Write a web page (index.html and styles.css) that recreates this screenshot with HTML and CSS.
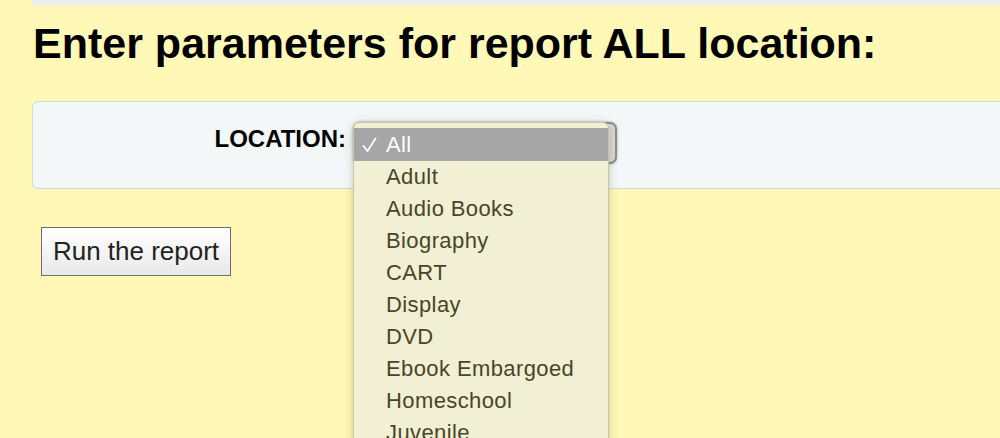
FILE: index.html
```html
<!DOCTYPE html>
<html>
<head>
<meta charset="utf-8">
<link rel="stylesheet" href="styles.css">
</head>
<body>
<div class="topbar"></div>
<h1 class="title">Enter parameters for report ALL location:</h1>
<div class="params">
  <div class="param-row">
    <label class="param-label">LOCATION:</label>
    <div class="select">
      <div class="select-box"></div>
      <ul class="popup">
        <li class="opt selected"><svg class="check" width="15" height="16" viewBox="0 0 15 16"><path d="M1.5 9 L5.5 14 L13.5 1.5" fill="none" stroke="#fff" stroke-width="1.8" stroke-linecap="round" stroke-linejoin="round"/></svg>All</li>
        <li class="opt">Adult</li>
        <li class="opt">Audio Books</li>
        <li class="opt">Biography</li>
        <li class="opt">CART</li>
        <li class="opt">Display</li>
        <li class="opt">DVD</li>
        <li class="opt">Ebook Embargoed</li>
        <li class="opt">Homeschool</li>
        <li class="opt">Juvenile</li>
      </ul>
    </div>
  </div>
</div>
<button class="run">Run the report</button>
</body>
</html>
```
FILE: styles.css
```css
html, body {
  margin: 0;
  padding: 0;
  overflow: hidden;
  height: 438px;
}
body {
  background: #fff8b7;
  font-family: "Liberation Sans", Arial, sans-serif;
  color: #000;
}
.topbar {
  margin-left: 32px;
  height: 5px;
  background: #eaf0f2;
}
.title {
  margin: 17px 0 0 33px;
  font-size: 43px;
  line-height: 42px;
  font-weight: bold;
  white-space: nowrap;
}
.params {
  margin: 37px 0 0 32px;
  width: 1000px;
  height: 86px;
  background: #f3f7f8;
  border: 1px solid #c6dcdd;
  border-radius: 6px;
  box-sizing: content-box;
}
.param-row {
  display: flex;
  padding-top: 20px;
}
.param-label {
  width: 313px;
  text-align: right;
  font-weight: bold;
  font-size: 24px;
  line-height: 24px;
  margin-top: 5px;
}
.select {
  position: relative;
  margin-left: 7px;
  width: 264px;
  height: 42px;
}
.select-box {
  width: 264px;
  height: 42px;
  box-sizing: border-box;
  border: 2px solid #8e8e8e;
  border-radius: 7px;
  background: #d8d8d8;
  box-shadow: 0 0 3px rgba(0,0,0,0.3);
}
.popup {
  position: absolute;
  left: 0;
  top: 0;
  width: 256px;
  height: 400px;
  margin: 0;
  padding: 5px 0 0 0;
  box-sizing: border-box;
  list-style: none;
  background: #f1efd4;
  border: 1px solid #c7c3a6;
  border-radius: 6px 6px 0 0;
  box-shadow: 0 2px 10px rgba(80,70,0,0.25);
  font-family: "Liberation Sans", Arial, sans-serif;
}
.opt {
  height: 32px;
  line-height: 32px;
  padding-left: 32px;
  font-size: 22px;
  letter-spacing: 0.4px;
  color: #4a4527;
  white-space: nowrap;
  position: relative;
}
.opt.selected {
  height: 33px;
  line-height: 33px;
  background: #a6a6a6;
  color: #fff;
}
.check {
  position: absolute;
  left: 8px;
  top: 9px;
}
.run {
  display: block;
  margin: 38px 0 0 41px;
  width: 190px;
  height: 49px;
  padding: 0;
  font-family: "Liberation Sans", Arial, sans-serif;
  font-size: 26px;
  color: #222;
  background: linear-gradient(#ffffff, #e9e9e9);
  border: 1px solid #6e6e6e;
  border-radius: 0;
}
```
